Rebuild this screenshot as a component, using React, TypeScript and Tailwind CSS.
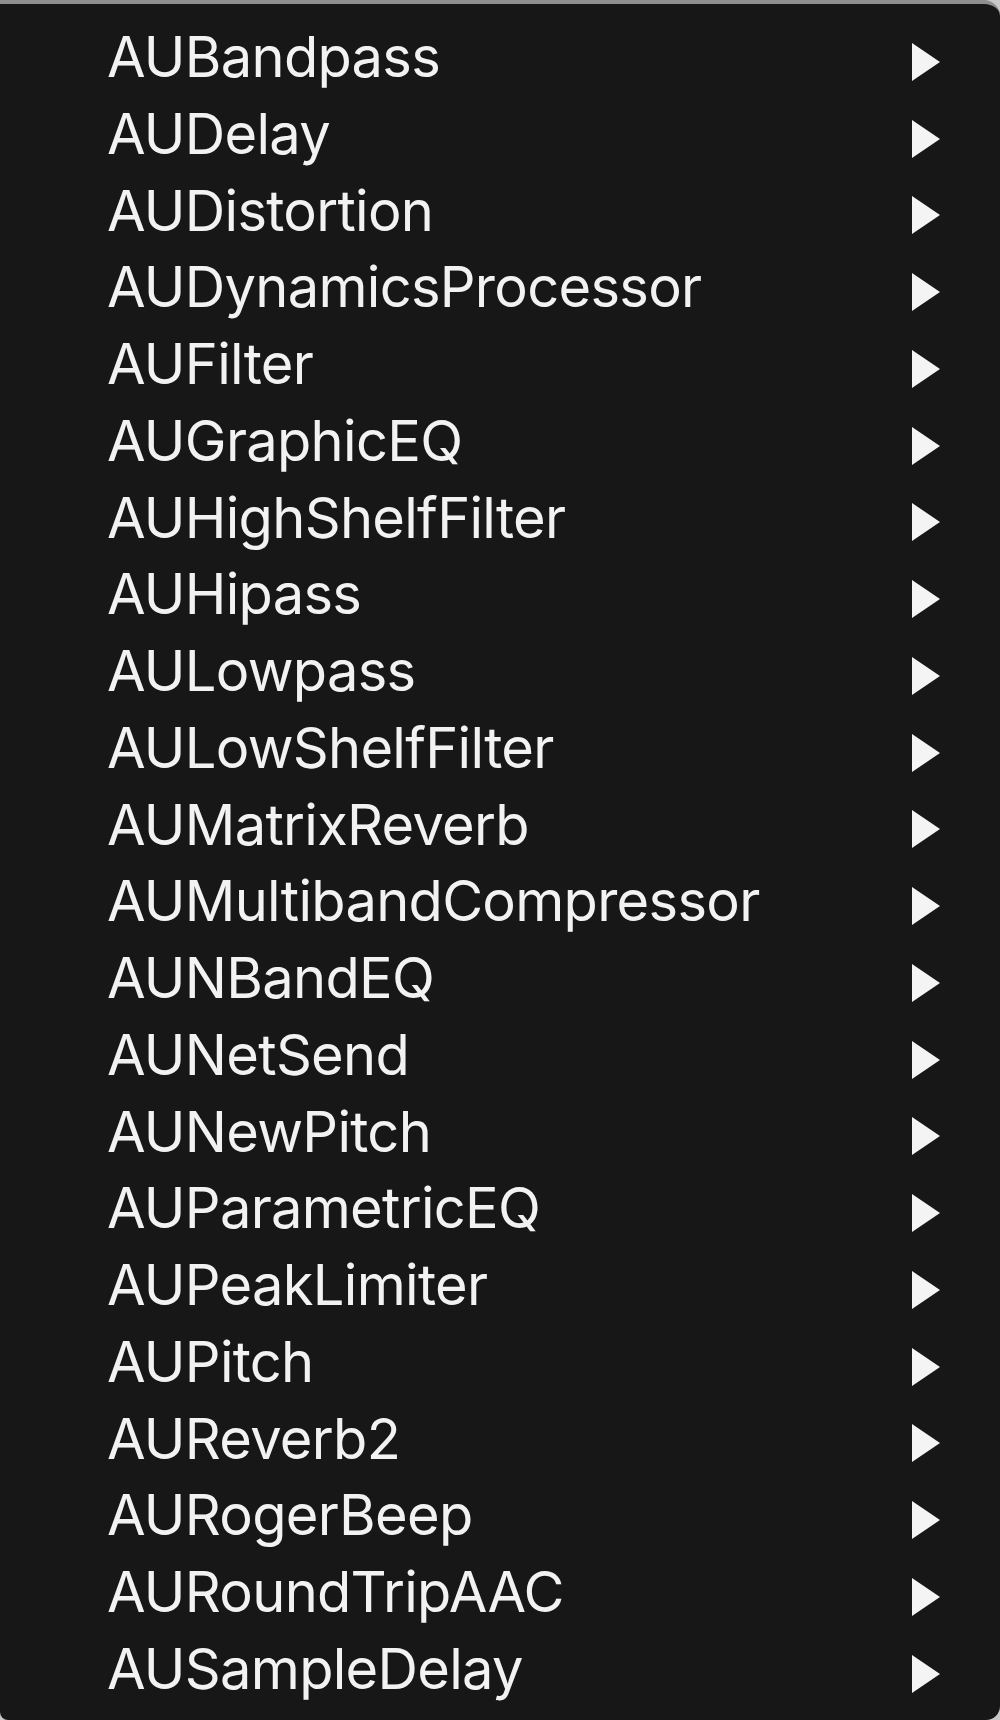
import React from "react";

const units = [
  "AUBandpass",
  "AUDelay",
  "AUDistortion",
  "AUDynamicsProcessor",
  "AUFilter",
  "AUGraphicEQ",
  "AUHighShelfFilter",
  "AUHipass",
  "AULowpass",
  "AULowShelfFilter",
  "AUMatrixReverb",
  "AUMultibandCompressor",
  "AUNBandEQ",
  "AUNetSend",
  "AUNewPitch",
  "AUParametricEQ",
  "AUPeakLimiter",
  "AUPitch",
  "AUReverb2",
  "AURogerBeep",
  "AURoundTripAAC",
  "AUSampleDelay",
];

// submenu arrow on the right of each entry
const Arrow = () => (
  <svg width="28" height="38" viewBox="0 0 28 38" className="mt-[9px] shrink-0">
    <polygon points="0,0 28,19 0,38" fill="#f4f4f4" />
  </svg>
);

export default function App() {
  return (
    <div className="w-[1000px] h-[1720px] bg-[#c9c9c9] overflow-hidden">
      <div
        className="h-full bg-[#171717] border-t-4 border-[#8f8f8f] rounded-tr-[16px] rounded-br-[14px] rounded-bl-[8px] pt-[15px] pl-[107px] pr-[60px]"
        style={{ fontFamily: "Inter, 'Noto Sans', sans-serif" }}
      >
        {units.map((name) => (
          <div key={name} className="flex items-center justify-between h-[76.76px]">
            <span className="text-[56px] leading-[76.76px] text-[#f2f2f2] tracking-[-0.7px]">
              {name}
            </span>
            <Arrow />
          </div>
        ))}
      </div>
    </div>
  );
}
